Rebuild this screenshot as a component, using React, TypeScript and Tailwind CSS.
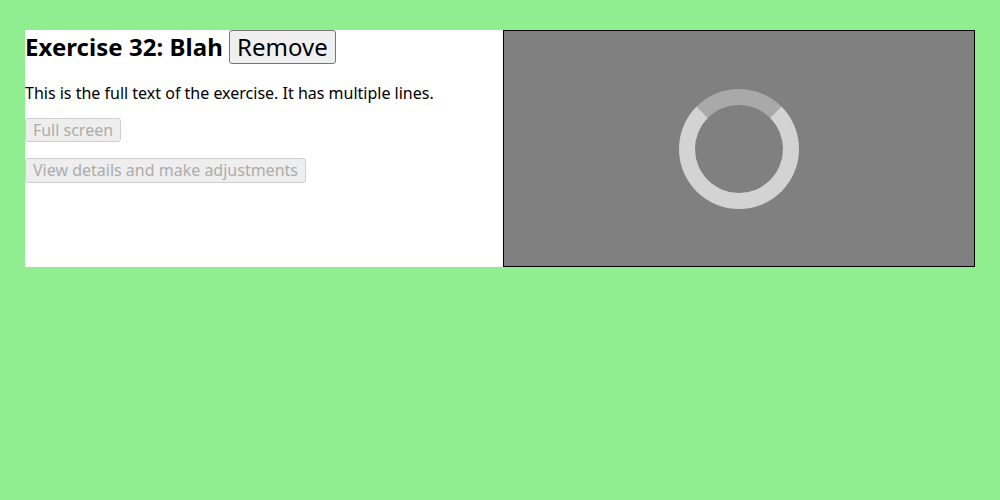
export default function App() {
  return (
    <main className="min-h-screen bg-[#90ee90] px-[25px] pt-[30px] font-['Noto_Sans',sans-serif] text-base leading-[22px] text-black">
      <section className="flex h-[237px] bg-white">
        <div className="w-[478px] shrink-0">
          <h2 className="h-[34px] text-2xl leading-[34px] font-bold tracking-[0.04px] whitespace-nowrap">
            Exercise 32: Blah{' '}
            <button className="box-border h-[34px] rounded-[3px] border border-[#767676] bg-[#efefef] px-[7px] pb-px align-top leading-[32px] font-normal tracking-normal">
              Remove
            </button>
          </h2>
          <p className="mt-[18px]">This is the full text of the exercise. It has multiple lines.</p>
          <button disabled className="mt-[14px] block h-[24px] w-[96px] rounded-[3px] border border-[#cfcfcf] bg-[#eeeeee] text-[#acacac]">
            Full screen
          </button>
          <button disabled className="mt-[16px] block h-[25px] w-[281px] rounded-[3px] border border-[#cfcfcf] bg-[#eeeeee] pb-px text-[#acacac]">
            View details and make adjustments
          </button>
        </div>
        <div className="flex flex-1 justify-center border border-black bg-[#808080] pt-[58px]">
          <div className="size-[120px] rounded-full border-[16px] border-[#d3d3d3] border-t-[#a9a9a9]" />
        </div>
      </section>
    </main>
  );
}
